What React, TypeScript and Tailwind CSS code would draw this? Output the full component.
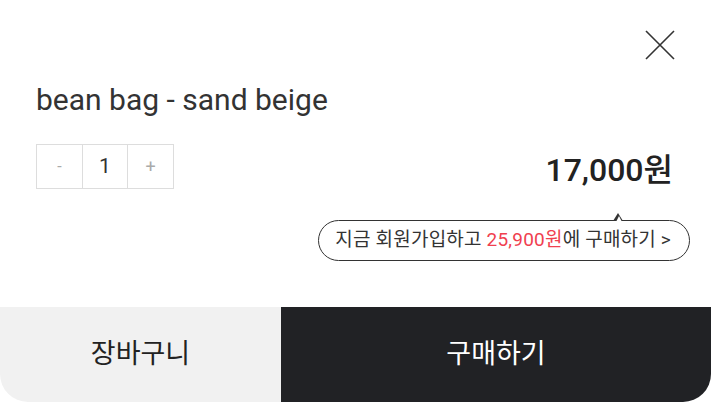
export default function App() {
  return (
    <div className="flex h-[402px] w-[711px] flex-col overflow-hidden rounded-b-[28px] bg-white font-['Roboto','Noto_Sans_CJK_KR',sans-serif] text-[#222]">
      <div className="flex justify-end pr-[36px] pt-[30px]">
        <button className="h-[30px] w-[30px]">
          <svg viewBox="0 0 30 30" className="h-[30px] w-[30px]" fill="none" stroke="#333" strokeWidth="1.6">
            <path d="M1 1L29 29M29 1L1 29" />
          </svg>
        </button>
      </div>

      <h1 className="mt-[23px] pl-[36px] text-[30px] leading-[34px] text-[#333]">bean bag - sand beige</h1>

      <div className="mt-[27px] flex h-[45px] items-center justify-between pl-[36px] pr-[38px]">
        <div className="flex h-[45px] border border-[#ddd]">
          <button className="flex w-[45px] items-center justify-center text-[16px] text-[#aaa]">-</button>
          <div className="flex w-[46px] items-center justify-center border-x border-[#ddd] text-[21px] text-[#333]">1</div>
          <button className="flex w-[45px] items-center justify-center text-[18px] text-[#aaa]">+</button>
        </div>
        <div className="mt-[6px] text-[32px] font-medium leading-none text-[#222]">17,000원</div>
      </div>

      <div className="mt-[31px] flex justify-end pr-[21px]">
        <div className="relative flex h-[41px] items-center rounded-full border-[1.5px] border-[#333] bg-white pl-[16px] pr-[18px] text-[19px] tracking-[0.2px] text-[#333]">
          <span className="absolute -top-[8px] right-[66px] h-0 w-0 border-x-[5px] border-b-[8px] border-x-transparent border-b-[#333]" />
          <span className="absolute -top-[5px] right-[67.5px] h-0 w-0 border-x-[3.5px] border-b-[6px] border-x-transparent border-b-white" />
          <span>
            지금 회원가입하고 <span className="text-[#f0404f]">25,900원</span>에 구매하기 &gt;
          </span>
        </div>
      </div>

      <div className="mt-auto flex h-[95px]">
        <button className="flex w-[281px] items-center justify-center bg-[#f1f1f1] text-[27px] text-[#222]">장바구니</button>
        <button className="flex flex-1 items-center justify-center bg-[#212225] text-[27px] text-white">구매하기</button>
      </div>
    </div>
  );
}
